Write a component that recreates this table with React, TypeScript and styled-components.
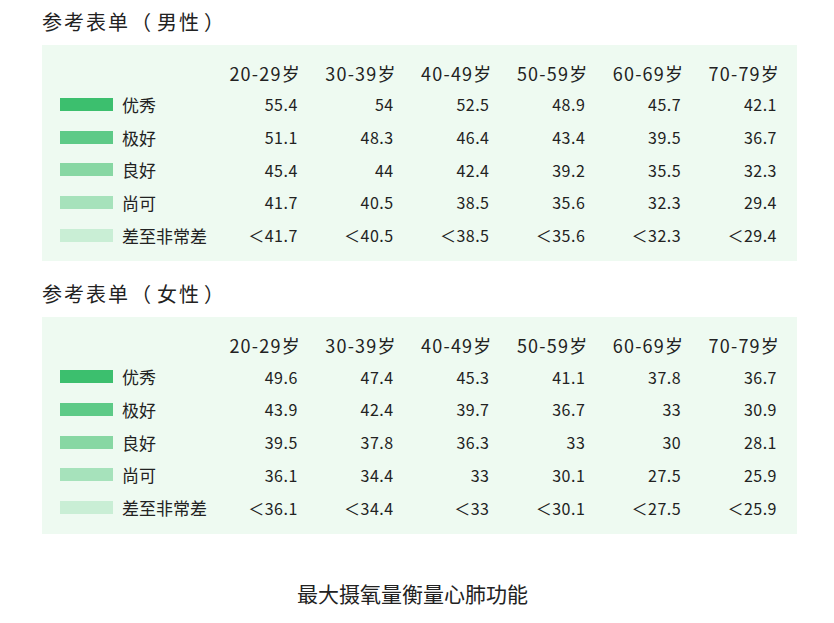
import React from "react";
import styled, { createGlobalStyle } from "styled-components";

const GlobalStyle = createGlobalStyle`
  body {
    margin: 0;
    background: #ffffff;
    font-family: "Noto Sans CJK SC", "Noto Sans", sans-serif;
    color: #222222;
  }
`;

const Page = styled.div`
  width: 834px;
  padding: 10px 37px 0 42px;
  box-sizing: border-box;
`;

const Section = styled.section<{ $first?: boolean }>`
  margin-top: ${(p) => (p.$first ? "0" : "21px")};
`;

const Title = styled.h2`
  margin: 0;
  padding-bottom: 11px;
  font-size: 20px;
  line-height: 24px;
  font-weight: 400;
  letter-spacing: 2px;
  color: #222222;
`;

const Paren = styled.span<{ $open?: boolean }>`
  margin: ${(p) => (p.$open ? "0 4px 0 1px" : "0 3px")};
`;

const Panel = styled.div`
  background: #eefaf1;
  padding: 12px 18px 10px;
  display: grid;
  grid-template-columns: 144px repeat(6, 1fr);
`;

const HeadCell = styled.div`
  height: 31px;
  display: flex;
  align-items: center;
  justify-content: flex-end;
  font-size: 18px;
  letter-spacing: 1.2px;
  margin-right: -1px;
  color: #222222;
`;

const Legend = styled.div`
  height: 32.7px;
  display: flex;
  align-items: center;
  gap: 9px;
  font-size: 17px;
  white-space: nowrap;
`;

const Swatch = styled.span<{ $color: string }>`
  width: 53px;
  height: 13px;
  background: ${(p) => p.$color};
  flex-shrink: 0;
`;

const Value = styled.div`
  height: 32.7px;
  display: flex;
  align-items: center;
  justify-content: flex-end;
  padding-right: 2px;
  font-size: 16px;
  letter-spacing: 0.5px;
  white-space: nowrap;
`;

const Caption = styled.p`
  margin: 47px 0 0;
  padding-right: 14px;
  text-align: center;
  font-size: 21px;
  line-height: 24px;
  color: #222222;
`;

const ages = ["20-29岁", "30-39岁", "40-49岁", "50-59岁", "60-69岁", "70-79岁"];

const levels = [
  { label: "优秀", color: "#3cbf6e" },
  { label: "极好", color: "#5dca87" },
  { label: "良好", color: "#87d7a3" },
  { label: "尚可", color: "#a6e2bb" },
  { label: "差至非常差", color: "#c9eed5" },
];

const male = [
  ["55.4", "54", "52.5", "48.9", "45.7", "42.1"],
  ["51.1", "48.3", "46.4", "43.4", "39.5", "36.7"],
  ["45.4", "44", "42.4", "39.2", "35.5", "32.3"],
  ["41.7", "40.5", "38.5", "35.6", "32.3", "29.4"],
  ["＜41.7", "＜40.5", "＜38.5", "＜35.6", "＜32.3", "＜29.4"],
];

const female = [
  ["49.6", "47.4", "45.3", "41.1", "37.8", "36.7"],
  ["43.9", "42.4", "39.7", "36.7", "33", "30.9"],
  ["39.5", "37.8", "36.3", "33", "30", "28.1"],
  ["36.1", "34.4", "33", "30.1", "27.5", "25.9"],
  ["＜36.1", "＜34.4", "＜33", "＜30.1", "＜27.5", "＜25.9"],
];

const ScoreTable = ({ rows }: { rows: string[][] }) => (
  <Panel>
    <HeadCell />
    {ages.map((a) => (
      <HeadCell key={a}>{a}</HeadCell>
    ))}
    {levels.map((lv, i) => (
      <React.Fragment key={lv.label}>
        <Legend>
          <Swatch $color={lv.color} />
          {lv.label}
        </Legend>
        {rows[i].map((v, j) => (
          <Value key={j}>{v}</Value>
        ))}
      </React.Fragment>
    ))}
  </Panel>
);

const App = () => {
  return (
    <>
      <GlobalStyle />
      <Page>
        <Section $first>
          <Title>
            参考表单<Paren $open>（</Paren>男性<Paren>）</Paren>
          </Title>
          <ScoreTable rows={male} />
        </Section>
        <Section>
          <Title>
            参考表单<Paren $open>（</Paren>女性<Paren>）</Paren>
          </Title>
          <ScoreTable rows={female} />
        </Section>
        <Caption>最大摄氧量衡量心肺功能</Caption>
      </Page>
    </>
  );
};

export default App;
